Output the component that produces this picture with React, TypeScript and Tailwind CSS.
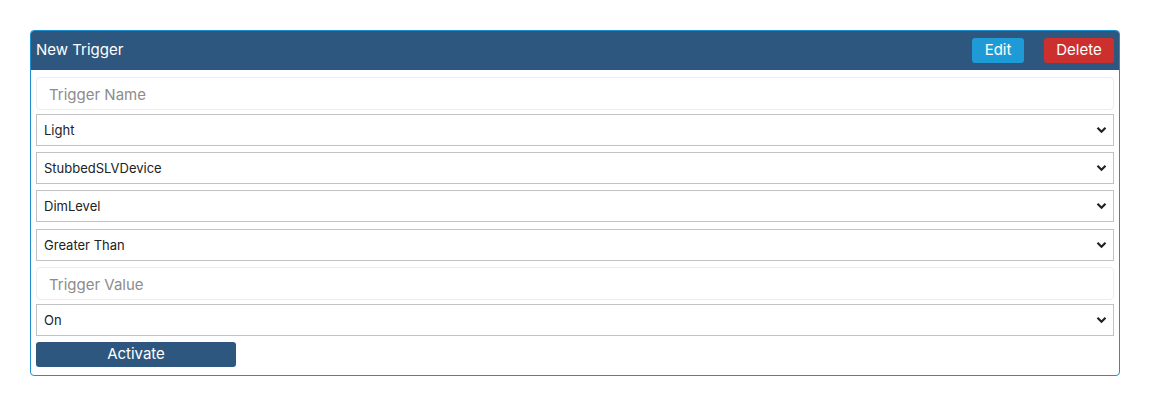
import React from "react";

const font = { fontFamily: "Inter, 'Open Sans', sans-serif" };

function Chevron() {
  return (
    <svg
      width="11"
      height="8"
      viewBox="0 0 11 8"
      className="pointer-events-none absolute right-[7px] top-1/2 -translate-y-1/2"
    >
      <path d="M1.5 1.8 L5.5 5.8 L9.5 1.8" fill="none" stroke="#222" strokeWidth="2.2" />
    </svg>
  );
}

function SelectBox({ value, className }: { value: string; className?: string }) {
  return (
    <div className={"relative " + (className ?? "")}>
      <select
        defaultValue={value}
        className="block h-[32px] w-full appearance-none border border-[#c2c2c2] bg-white pl-[7px] pt-[1px] text-[13px] text-[#222] outline-none"
      >
        <option>{value}</option>
      </select>
      <Chevron />
    </div>
  );
}

function TextBox({ placeholder, className }: { placeholder: string; className?: string }) {
  return (
    <input
      placeholder={placeholder}
      className={
        "block h-[33px] w-full rounded-[4px] border border-[#ececec] bg-white px-[12px] pt-[2px] text-[15px] text-[#333] outline-none placeholder:text-[#8c8c8c] " +
        (className ?? "")
      }
    />
  );
}

export default function App() {
  return (
    <div className="min-h-screen bg-white p-[30px]" style={font}>
      <div className="overflow-hidden rounded-[4px] border border-[#1e90cf]">
        <div className="flex h-[39px] items-center justify-between bg-[#2e5780] pl-[5px] pr-[5px]">
          <span className="text-[15px] text-white">New Trigger</span>
          <div className="flex items-center gap-[20px]">
            <button className="h-[25px] w-[52px] rounded-[3px] bg-[#1e9bd6] text-[15px] text-white">
              Edit
            </button>
            <button className="h-[25px] w-[70px] rounded-[3px] bg-[#cc302e] text-[15px] text-white">
              Delete
            </button>
          </div>
        </div>
        <div className="flex flex-col px-[5px] pb-[8px] pt-[7px]">
          <TextBox placeholder="Trigger Name" />
          <SelectBox value="Light" className="mt-[4px]" />
          <SelectBox value="StubbedSLVDevice" className="mt-[6px]" />
          <SelectBox value="DimLevel" className="mt-[6px]" />
          <SelectBox value="Greater Than" className="mt-[7px]" />
          <TextBox placeholder="Trigger Value" className="mt-[6px]" />
          <SelectBox value="On" className="mt-[4px]" />
          <button className="mt-[6px] h-[25px] w-[200px] rounded-[3px] bg-[#2e5780] text-[15px] text-white">
            Activate
          </button>
        </div>
      </div>
    </div>
  );
}
